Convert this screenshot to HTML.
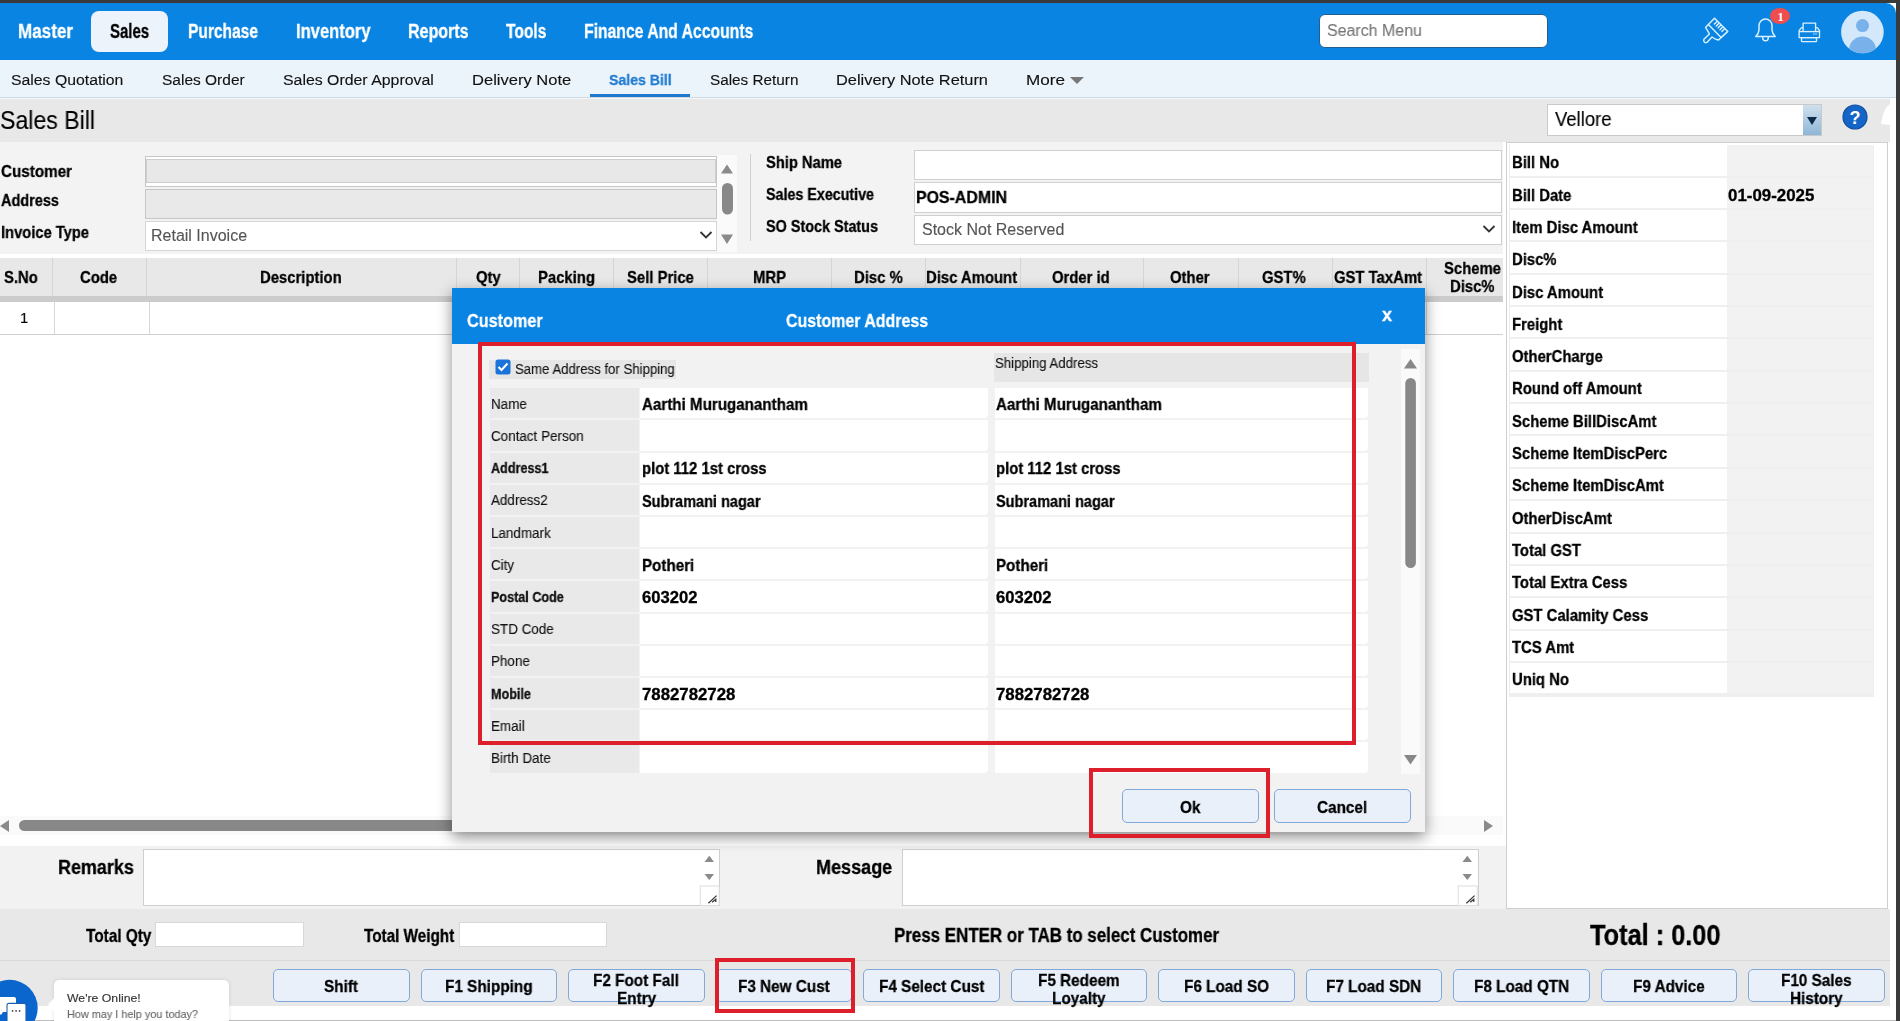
<!DOCTYPE html>
<html><head><meta charset="utf-8"><title>Sales Bill</title>
<style>
html,body{margin:0;padding:0;width:1900px;height:1021px;overflow:hidden;background:#fff}
body{position:relative;font-family:"Liberation Sans",sans-serif}
.t{position:absolute;white-space:nowrap;line-height:1.117;transform-origin:0 0;-webkit-font-smoothing:antialiased;will-change:transform}
.b{position:absolute}
.s{position:absolute;overflow:visible}
</style></head><body>
<div class="b" style="left:0.0px;top:0.0px;width:1900.0px;height:1021.0px;background:#fff"></div>
<div class="b" style="left:0.0px;top:3.0px;width:1896.0px;height:57.0px;background:#0984e3;border-top-right-radius:10px"></div>
<div class="b" style="left:91.0px;top:11.0px;width:77.0px;height:41.0px;background:#edf3fa;border-radius:8px"></div>
<div class="t" style="left:17.80px;top:21.15px;font-size:19.50px;font-weight:700;-webkit-text-stroke:0.3px #fff;transform:scaleX(0.8749);color:#fff;">Master</div>
<div class="t" style="left:110.00px;top:21.15px;font-size:19.50px;font-weight:700;-webkit-text-stroke:0.3px #000;transform:scaleX(0.7692);color:#000;">Sales</div>
<div class="t" style="left:187.80px;top:21.15px;font-size:19.50px;font-weight:700;-webkit-text-stroke:0.3px #fff;transform:scaleX(0.7973);color:#fff;">Purchase</div>
<div class="t" style="left:296.00px;top:21.15px;font-size:19.50px;font-weight:700;-webkit-text-stroke:0.3px #fff;transform:scaleX(0.8488);color:#fff;">Inventory</div>
<div class="t" style="left:408.40px;top:21.15px;font-size:19.50px;font-weight:700;-webkit-text-stroke:0.3px #fff;transform:scaleX(0.8225);color:#fff;">Reports</div>
<div class="t" style="left:506.00px;top:21.15px;font-size:19.50px;font-weight:700;-webkit-text-stroke:0.3px #fff;transform:scaleX(0.7972);color:#fff;">Tools</div>
<div class="t" style="left:584.20px;top:21.15px;font-size:19.50px;font-weight:700;-webkit-text-stroke:0.3px #fff;transform:scaleX(0.8068);color:#fff;">Finance And Accounts</div>
<div class="b" style="left:1318.5px;top:14.3px;width:229.5px;height:33.9px;background:#fff;border-radius:6px;border:1px solid #245d8f;box-sizing:border-box"></div>
<div class="t" style="left:1327.30px;top:21.60px;font-size:16.80px;-webkit-text-stroke:0.12px #777;transform:scaleX(0.9507);color:#777;">Search Menu</div>
<div class="b" style="left:0.0px;top:60.0px;width:1896.0px;height:37.0px;background:#ebf3fb"></div>
<div class="b" style="left:0.0px;top:97.0px;width:1896.0px;height:1.0px;background:#d0d8e0"></div>
<div class="b" style="left:0.0px;top:98.0px;width:1896.0px;height:1.0px;background:#f4f8fc"></div>
<div class="t" style="left:11.30px;top:70.95px;font-size:15.30px;-webkit-text-stroke:0.12px #111;transform:scaleX(1.0324);color:#111;">Sales Quotation</div>
<div class="t" style="left:162.00px;top:70.95px;font-size:15.30px;-webkit-text-stroke:0.12px #111;transform:scaleX(1.0130);color:#111;">Sales Order</div>
<div class="t" style="left:283.20px;top:70.95px;font-size:15.30px;-webkit-text-stroke:0.12px #111;transform:scaleX(1.0369);color:#111;">Sales Order Approval</div>
<div class="t" style="left:472.00px;top:70.95px;font-size:15.30px;-webkit-text-stroke:0.12px #111;transform:scaleX(1.0813);color:#111;">Delivery Note</div>
<div class="t" style="left:609.00px;top:70.95px;font-size:15.30px;font-weight:700;-webkit-text-stroke:0.3px #1f7bd0;transform:scaleX(0.9216);color:#1f7bd0;">Sales Bill</div>
<div class="t" style="left:709.50px;top:70.95px;font-size:15.30px;-webkit-text-stroke:0.12px #111;color:#111;">Sales Return</div>
<div class="t" style="left:836.00px;top:70.95px;font-size:15.30px;-webkit-text-stroke:0.12px #111;transform:scaleX(1.0704);color:#111;">Delivery Note Return</div>
<div class="t" style="left:1026.00px;top:70.95px;font-size:15.30px;-webkit-text-stroke:0.12px #111;transform:scaleX(1.1188);color:#111;">More</div>
<div class="b" style="left:590.0px;top:94.0px;width:100.0px;height:3.0px;background:#1f7bd0"></div>
<svg class="s" style="left:1068px;top:75px" width="18" height="10"><path d="M2 2 L16 2 L9 9 Z" fill="#777"/></svg>
<div class="b" style="left:0.0px;top:99.0px;width:1890.0px;height:43.0px;background:#e8e8e8"></div>
<div class="b" style="left:1890.0px;top:98.0px;width:6.0px;height:923.0px;background:#fff"></div>
<div class="t" style="left:0.00px;top:107.07px;font-size:25.00px;-webkit-text-stroke:0.12px #000;transform:scaleX(0.9239);color:#000;">Sales Bill</div>
<div class="b" style="left:1547.0px;top:104.0px;width:275.0px;height:32.0px;background:#fff;box-shadow:inset 0 0 0 1px #c9c9c9"></div>
<div class="b" style="left:1803.0px;top:105.0px;width:18.0px;height:30.0px;background:linear-gradient(#cfe0ee,#8fb6d6)"></div>
<svg class="s" style="left:1805px;top:114px" width="14" height="14"><path d="M2 3 L12 3 L7 11 Z" fill="#0b2a4a"/></svg>
<div class="t" style="left:1555.00px;top:107.90px;font-size:20.00px;-webkit-text-stroke:0.12px #000;transform:scaleX(0.9255);color:#000;">Vellore</div>
<svg class="s" style="left:1842px;top:104px" width="26" height="26"><circle cx="13" cy="13" r="12" fill="#1565c8" stroke="#0f4fa0" stroke-width="1.2"/><text x="13" y="19.5" text-anchor="middle" font-family="Liberation Sans" font-weight="700" font-size="18" fill="#fff">?</text></svg>
<svg class="s" style="left:1875px;top:100px" width="16" height="30"><path d="M15 4 L11 8 L8 14 L6 24 L15 25 Z" fill="#fff"/></svg>
<div class="b" style="left:0.0px;top:142.0px;width:1503.0px;height:112.0px;background:#f3f3f3"></div>
<div class="b" style="left:0.0px;top:253.5px;width:1503.0px;height:4.5px;background:#fff"></div>
<div class="t" style="left:1.00px;top:162.47px;font-size:16.50px;font-weight:700;-webkit-text-stroke:0.3px #000;transform:scaleX(0.9219);color:#000;">Customer</div>
<div class="t" style="left:1.00px;top:191.27px;font-size:16.50px;font-weight:700;-webkit-text-stroke:0.3px #000;transform:scaleX(0.8784);color:#000;">Address</div>
<div class="t" style="left:1.00px;top:223.07px;font-size:16.50px;font-weight:700;-webkit-text-stroke:0.3px #000;transform:scaleX(0.8913);color:#000;">Invoice Type</div>
<div class="b" style="left:145.2px;top:155.5px;width:571.5px;height:31.0px;background:#fff;border:1px solid #c6c6c6;box-sizing:border-box"></div>
<div class="b" style="left:146.0px;top:158.6px;width:570.0px;height:24.0px;background:#e8e8e8;border:1px solid #cdcdcd;box-sizing:border-box"></div>
<div class="b" style="left:145.2px;top:188.5px;width:571.5px;height:30.3px;background:#e9e9e9;border:1px solid #c6c6c6;box-sizing:border-box"></div>
<div class="b" style="left:145.2px;top:220.5px;width:571.5px;height:30.5px;background:#fff;border:1px solid #d6d6d6;box-sizing:border-box"></div>
<div class="t" style="left:151.00px;top:227.02px;font-size:16.00px;-webkit-text-stroke:0.12px #555;color:#555;">Retail Invoice</div>
<svg class="s" style="left:699px;top:230px" width="14" height="10"><path d="M1.5 2 L7 7.5 L12.5 2" stroke="#333" stroke-width="1.8" fill="none"/></svg>
<div class="b" style="left:717.0px;top:155.0px;width:20.0px;height:97.0px;background:#fafafa"></div>
<svg class="s" style="left:717px;top:155px" width="20" height="97"><path d="M4 18.5 L10 9.5 L16 18.5 Z" fill="#8a8a8a"/><rect x="5" y="28" width="11" height="31.5" rx="5.5" fill="#888"/><path d="M4 79.5 L16 79.5 L10 89 Z" fill="#8a8a8a"/></svg>
<div class="b" style="left:750.0px;top:154.0px;width:1.0px;height:87.0px;background:#cfcfcf"></div>
<div class="t" style="left:766.30px;top:153.47px;font-size:16.50px;font-weight:700;-webkit-text-stroke:0.3px #000;transform:scaleX(0.8913);color:#000;">Ship Name</div>
<div class="t" style="left:766.30px;top:185.07px;font-size:16.50px;font-weight:700;-webkit-text-stroke:0.3px #000;transform:scaleX(0.8657);color:#000;">Sales Executive</div>
<div class="t" style="left:766.30px;top:216.67px;font-size:16.50px;font-weight:700;-webkit-text-stroke:0.3px #000;transform:scaleX(0.8725);color:#000;">SO Stock Status</div>
<div class="b" style="left:914.0px;top:149.5px;width:588.0px;height:30.5px;background:#fff;border:1px solid #d0d0d0;box-sizing:border-box"></div>
<div class="b" style="left:914.0px;top:181.5px;width:588.0px;height:31.0px;background:#fff;border:1px solid #d0d0d0;box-sizing:border-box"></div>
<div class="t" style="left:916.00px;top:188.07px;font-size:16.50px;font-weight:700;-webkit-text-stroke:0.3px #000;transform:scaleX(0.9638);color:#000;">POS-ADMIN</div>
<div class="b" style="left:914.0px;top:215.0px;width:588.0px;height:29.5px;background:#fff;border:1px solid #d0d0d0;box-sizing:border-box"></div>
<div class="t" style="left:922.00px;top:221.02px;font-size:16.00px;-webkit-text-stroke:0.12px #555;color:#555;">Stock Not Reserved</div>
<svg class="s" style="left:1482px;top:224px" width="14" height="10"><path d="M1.5 2 L7 7.5 L12.5 2" stroke="#333" stroke-width="1.8" fill="none"/></svg>
<div class="b" style="left:1506.0px;top:142.0px;width:382.0px;height:767.0px;background:#fff;border:1px solid #cfcfcf;box-sizing:border-box"></div>
<div class="b" style="left:1509.0px;top:145.0px;width:365.0px;height:552.0px;background:#efefef"></div>
<div class="b" style="left:1510.0px;top:145.2px;width:217.0px;height:30.4px;background:#fff"></div>
<div class="b" style="left:1727.0px;top:145.2px;width:146.0px;height:30.4px;background:#f2f2f2"></div>
<div class="t" style="left:1512.00px;top:153.37px;font-size:16.50px;font-weight:700;-webkit-text-stroke:0.3px #000;transform:scaleX(0.9000);color:#000;">Bill No</div>
<div class="b" style="left:1510.0px;top:177.6px;width:217.0px;height:30.4px;background:#fff"></div>
<div class="b" style="left:1727.0px;top:177.6px;width:146.0px;height:30.4px;background:#f2f2f2"></div>
<div class="t" style="left:1512.00px;top:185.67px;font-size:16.50px;font-weight:700;-webkit-text-stroke:0.3px #000;transform:scaleX(0.9000);color:#000;">Bill Date</div>
<div class="b" style="left:1510.0px;top:209.9px;width:217.0px;height:30.4px;background:#fff"></div>
<div class="b" style="left:1727.0px;top:209.9px;width:146.0px;height:30.4px;background:#f2f2f2"></div>
<div class="t" style="left:1512.00px;top:217.97px;font-size:16.50px;font-weight:700;-webkit-text-stroke:0.3px #000;transform:scaleX(0.9000);color:#000;">Item Disc Amount</div>
<div class="b" style="left:1510.0px;top:242.3px;width:217.0px;height:30.4px;background:#fff"></div>
<div class="b" style="left:1727.0px;top:242.3px;width:146.0px;height:30.4px;background:#f2f2f2"></div>
<div class="t" style="left:1512.00px;top:250.27px;font-size:16.50px;font-weight:700;-webkit-text-stroke:0.3px #000;transform:scaleX(0.9000);color:#000;">Disc%</div>
<div class="b" style="left:1510.0px;top:274.6px;width:217.0px;height:30.4px;background:#fff"></div>
<div class="b" style="left:1727.0px;top:274.6px;width:146.0px;height:30.4px;background:#f2f2f2"></div>
<div class="t" style="left:1512.00px;top:282.57px;font-size:16.50px;font-weight:700;-webkit-text-stroke:0.3px #000;transform:scaleX(0.9000);color:#000;">Disc Amount</div>
<div class="b" style="left:1510.0px;top:307.0px;width:217.0px;height:30.4px;background:#fff"></div>
<div class="b" style="left:1727.0px;top:307.0px;width:146.0px;height:30.4px;background:#f2f2f2"></div>
<div class="t" style="left:1512.00px;top:314.87px;font-size:16.50px;font-weight:700;-webkit-text-stroke:0.3px #000;transform:scaleX(0.9000);color:#000;">Freight</div>
<div class="b" style="left:1510.0px;top:339.4px;width:217.0px;height:30.4px;background:#fff"></div>
<div class="b" style="left:1727.0px;top:339.4px;width:146.0px;height:30.4px;background:#f2f2f2"></div>
<div class="t" style="left:1512.00px;top:347.17px;font-size:16.50px;font-weight:700;-webkit-text-stroke:0.3px #000;transform:scaleX(0.9000);color:#000;">OtherCharge</div>
<div class="b" style="left:1510.0px;top:371.7px;width:217.0px;height:30.4px;background:#fff"></div>
<div class="b" style="left:1727.0px;top:371.7px;width:146.0px;height:30.4px;background:#f2f2f2"></div>
<div class="t" style="left:1512.00px;top:379.47px;font-size:16.50px;font-weight:700;-webkit-text-stroke:0.3px #000;transform:scaleX(0.9000);color:#000;">Round off Amount</div>
<div class="b" style="left:1510.0px;top:404.1px;width:217.0px;height:30.4px;background:#fff"></div>
<div class="b" style="left:1727.0px;top:404.1px;width:146.0px;height:30.4px;background:#f2f2f2"></div>
<div class="t" style="left:1512.00px;top:411.77px;font-size:16.50px;font-weight:700;-webkit-text-stroke:0.3px #000;transform:scaleX(0.9000);color:#000;">Scheme BillDiscAmt</div>
<div class="b" style="left:1510.0px;top:436.4px;width:217.0px;height:30.4px;background:#fff"></div>
<div class="b" style="left:1727.0px;top:436.4px;width:146.0px;height:30.4px;background:#f2f2f2"></div>
<div class="t" style="left:1512.00px;top:444.07px;font-size:16.50px;font-weight:700;-webkit-text-stroke:0.3px #000;transform:scaleX(0.9000);color:#000;">Scheme ItemDiscPerc</div>
<div class="b" style="left:1510.0px;top:468.8px;width:217.0px;height:30.4px;background:#fff"></div>
<div class="b" style="left:1727.0px;top:468.8px;width:146.0px;height:30.4px;background:#f2f2f2"></div>
<div class="t" style="left:1512.00px;top:476.37px;font-size:16.50px;font-weight:700;-webkit-text-stroke:0.3px #000;transform:scaleX(0.9000);color:#000;">Scheme ItemDiscAmt</div>
<div class="b" style="left:1510.0px;top:501.2px;width:217.0px;height:30.4px;background:#fff"></div>
<div class="b" style="left:1727.0px;top:501.2px;width:146.0px;height:30.4px;background:#f2f2f2"></div>
<div class="t" style="left:1512.00px;top:508.67px;font-size:16.50px;font-weight:700;-webkit-text-stroke:0.3px #000;transform:scaleX(0.9000);color:#000;">OtherDiscAmt</div>
<div class="b" style="left:1510.0px;top:533.5px;width:217.0px;height:30.4px;background:#fff"></div>
<div class="b" style="left:1727.0px;top:533.5px;width:146.0px;height:30.4px;background:#f2f2f2"></div>
<div class="t" style="left:1512.00px;top:540.97px;font-size:16.50px;font-weight:700;-webkit-text-stroke:0.3px #000;transform:scaleX(0.9000);color:#000;">Total GST</div>
<div class="b" style="left:1510.0px;top:565.9px;width:217.0px;height:30.4px;background:#fff"></div>
<div class="b" style="left:1727.0px;top:565.9px;width:146.0px;height:30.4px;background:#f2f2f2"></div>
<div class="t" style="left:1512.00px;top:573.27px;font-size:16.50px;font-weight:700;-webkit-text-stroke:0.3px #000;transform:scaleX(0.9000);color:#000;">Total Extra Cess</div>
<div class="b" style="left:1510.0px;top:598.2px;width:217.0px;height:30.4px;background:#fff"></div>
<div class="b" style="left:1727.0px;top:598.2px;width:146.0px;height:30.4px;background:#f2f2f2"></div>
<div class="t" style="left:1512.00px;top:605.57px;font-size:16.50px;font-weight:700;-webkit-text-stroke:0.3px #000;transform:scaleX(0.9000);color:#000;">GST Calamity Cess</div>
<div class="b" style="left:1510.0px;top:630.6px;width:217.0px;height:30.4px;background:#fff"></div>
<div class="b" style="left:1727.0px;top:630.6px;width:146.0px;height:30.4px;background:#f2f2f2"></div>
<div class="t" style="left:1512.00px;top:637.87px;font-size:16.50px;font-weight:700;-webkit-text-stroke:0.3px #000;transform:scaleX(0.9000);color:#000;">TCS Amt</div>
<div class="b" style="left:1510.0px;top:663.0px;width:217.0px;height:30.4px;background:#fff"></div>
<div class="b" style="left:1727.0px;top:663.0px;width:146.0px;height:30.4px;background:#f2f2f2"></div>
<div class="t" style="left:1512.00px;top:670.17px;font-size:16.50px;font-weight:700;-webkit-text-stroke:0.3px #000;transform:scaleX(0.9000);color:#000;">Uniq No</div>
<div class="t" style="left:1727.60px;top:186.07px;font-size:16.50px;font-weight:700;-webkit-text-stroke:0.3px #000;transform:scaleX(1.0224);color:#000;">01-09-2025</div>
<div class="b" style="left:0.0px;top:258.0px;width:1503.0px;height:38.0px;background:#e8e8e8"></div>
<div class="b" style="left:0.0px;top:296.0px;width:1503.0px;height:6.0px;background:#cccccc"></div>
<div class="b" style="left:52.0px;top:258.0px;width:1.0px;height:38.0px;background:#d6d6d6"></div>
<div class="b" style="left:146.0px;top:258.0px;width:1.0px;height:38.0px;background:#d6d6d6"></div>
<div class="b" style="left:456.0px;top:258.0px;width:1.0px;height:38.0px;background:#d6d6d6"></div>
<div class="b" style="left:519.0px;top:258.0px;width:1.0px;height:38.0px;background:#d6d6d6"></div>
<div class="b" style="left:613.0px;top:258.0px;width:1.0px;height:38.0px;background:#d6d6d6"></div>
<div class="b" style="left:707.0px;top:258.0px;width:1.0px;height:38.0px;background:#d6d6d6"></div>
<div class="b" style="left:831.0px;top:258.0px;width:1.0px;height:38.0px;background:#d6d6d6"></div>
<div class="b" style="left:925.0px;top:258.0px;width:1.0px;height:38.0px;background:#d6d6d6"></div>
<div class="b" style="left:1019.6px;top:258.0px;width:1.0px;height:38.0px;background:#d6d6d6"></div>
<div class="b" style="left:1143.0px;top:258.0px;width:1.0px;height:38.0px;background:#d6d6d6"></div>
<div class="b" style="left:1238.0px;top:258.0px;width:1.0px;height:38.0px;background:#d6d6d6"></div>
<div class="b" style="left:1332.0px;top:258.0px;width:1.0px;height:38.0px;background:#d6d6d6"></div>
<div class="b" style="left:1426.0px;top:258.0px;width:1.0px;height:38.0px;background:#d6d6d6"></div>
<div class="t" style="left:4.00px;top:267.87px;font-size:16.50px;font-weight:700;-webkit-text-stroke:0.3px #000;transform:scaleX(0.9000);color:#000;">S.No</div>
<div class="t" style="left:80.44px;top:267.87px;font-size:16.50px;font-weight:700;-webkit-text-stroke:0.3px #000;transform:scaleX(0.9000);color:#000;">Code</div>
<div class="t" style="left:260.15px;top:267.87px;font-size:16.50px;font-weight:700;-webkit-text-stroke:0.3px #000;transform:scaleX(0.9000);color:#000;">Description</div>
<div class="t" style="left:475.62px;top:267.87px;font-size:16.50px;font-weight:700;-webkit-text-stroke:0.3px #000;transform:scaleX(0.9000);color:#000;">Qty</div>
<div class="t" style="left:537.52px;top:267.87px;font-size:16.50px;font-weight:700;-webkit-text-stroke:0.3px #000;transform:scaleX(0.9000);color:#000;">Packing</div>
<div class="t" style="left:626.57px;top:267.87px;font-size:16.50px;font-weight:700;-webkit-text-stroke:0.3px #000;transform:scaleX(0.9000);color:#000;">Sell Price</div>
<div class="t" style="left:752.50px;top:267.87px;font-size:16.50px;font-weight:700;-webkit-text-stroke:0.3px #000;transform:scaleX(0.9000);color:#000;">MRP</div>
<div class="t" style="left:853.65px;top:267.87px;font-size:16.50px;font-weight:700;-webkit-text-stroke:0.3px #000;transform:scaleX(0.9000);color:#000;">Disc %</div>
<div class="t" style="left:926.48px;top:267.87px;font-size:16.50px;font-weight:700;-webkit-text-stroke:0.3px #000;transform:scaleX(0.9000);color:#000;">Disc Amount</div>
<div class="t" style="left:1052.12px;top:267.87px;font-size:16.50px;font-weight:700;-webkit-text-stroke:0.3px #000;transform:scaleX(0.9000);color:#000;">Order id</div>
<div class="t" style="left:1170.20px;top:267.87px;font-size:16.50px;font-weight:700;-webkit-text-stroke:0.3px #000;transform:scaleX(0.9000);color:#000;">Other</div>
<div class="t" style="left:1262.13px;top:267.87px;font-size:16.50px;font-weight:700;-webkit-text-stroke:0.3px #000;transform:scaleX(0.9000);color:#000;">GST%</div>
<div class="t" style="left:1333.99px;top:267.87px;font-size:16.50px;font-weight:700;-webkit-text-stroke:0.3px #000;transform:scaleX(0.9000);color:#000;">GST TaxAmt</div>
<div class="t" style="left:1443.52px;top:258.57px;font-size:16.50px;font-weight:700;-webkit-text-stroke:0.3px #000;transform:scaleX(0.9000);color:#000;">Scheme</div>
<div class="t" style="left:1449.71px;top:277.07px;font-size:16.50px;font-weight:700;-webkit-text-stroke:0.3px #000;transform:scaleX(0.9000);color:#000;">Disc%</div>
<div class="b" style="left:0.0px;top:302.0px;width:1503.0px;height:33.0px;background:#fff"></div>
<div class="b" style="left:0.0px;top:334.0px;width:1503.0px;height:1.0px;background:#cfcfcf"></div>
<div class="b" style="left:54.0px;top:302.0px;width:1.0px;height:32.0px;background:#d8d8d8"></div>
<div class="b" style="left:149.0px;top:302.0px;width:1.0px;height:32.0px;background:#d8d8d8"></div>
<div class="b" style="left:456.0px;top:302.0px;width:1.0px;height:32.0px;background:#d8d8d8"></div>
<div class="b" style="left:519.0px;top:302.0px;width:1.0px;height:32.0px;background:#d8d8d8"></div>
<div class="b" style="left:613.0px;top:302.0px;width:1.0px;height:32.0px;background:#d8d8d8"></div>
<div class="b" style="left:707.0px;top:302.0px;width:1.0px;height:32.0px;background:#d8d8d8"></div>
<div class="b" style="left:831.0px;top:302.0px;width:1.0px;height:32.0px;background:#d8d8d8"></div>
<div class="b" style="left:925.0px;top:302.0px;width:1.0px;height:32.0px;background:#d8d8d8"></div>
<div class="b" style="left:1019.6px;top:302.0px;width:1.0px;height:32.0px;background:#d8d8d8"></div>
<div class="b" style="left:1143.0px;top:302.0px;width:1.0px;height:32.0px;background:#d8d8d8"></div>
<div class="b" style="left:1238.0px;top:302.0px;width:1.0px;height:32.0px;background:#d8d8d8"></div>
<div class="b" style="left:1332.0px;top:302.0px;width:1.0px;height:32.0px;background:#d8d8d8"></div>
<div class="b" style="left:1426.0px;top:302.0px;width:1.0px;height:32.0px;background:#d8d8d8"></div>
<div class="t" style="left:20.00px;top:310.43px;font-size:15.00px;-webkit-text-stroke:0.12px #000;transform:scaleX(0.9800);color:#000;">1</div>
<div class="b" style="left:0.0px;top:816.0px;width:1503.0px;height:19.0px;background:#fafafa"></div>
<svg class="s" style="left:0;top:816px" width="1503" height="19"><path d="M0 10 L9 4 L9 16 Z" fill="#8a8a8a"/><rect x="19" y="4" width="1380" height="11" rx="5.5" fill="#888"/><path d="M1484 4 L1493 10 L1484 16 Z" fill="#8a8a8a"/></svg>
<div class="b" style="left:0.0px;top:846.0px;width:1506.0px;height:63.0px;background:#f2f2f2"></div>
<div class="t" style="left:57.60px;top:855.90px;font-size:20.00px;font-weight:700;-webkit-text-stroke:0.3px #000;transform:scaleX(0.8970);color:#000;">Remarks</div>
<div class="t" style="left:815.80px;top:855.90px;font-size:20.00px;font-weight:700;-webkit-text-stroke:0.3px #000;transform:scaleX(0.9018);color:#000;">Message</div>
<div class="b" style="left:143.0px;top:849.0px;width:577.0px;height:57.0px;background:#fff;border:1px solid #cfcfcf;box-sizing:border-box"></div>
<svg class="s" style="left:699px;top:849px" width="20" height="57"><path d="M5.5 13 L10.3 6.8 L15 13 Z" fill="#8a8a8a"/><path d="M5.5 25 L15 25 L10.3 31 Z" fill="#8a8a8a"/><rect x="1.2" y="37" width="19" height="19.5" fill="#fff" stroke="#ddd"/><path d="M9.4 54.2 L17.6 46.6 M13.2 53.2 L16.8 50.2 L16.8 53" stroke="#333" stroke-width="1.2" fill="none"/></svg>
<div class="b" style="left:902.0px;top:849.0px;width:576.5px;height:57.0px;background:#fff;border:1px solid #cfcfcf;box-sizing:border-box"></div>
<svg class="s" style="left:1457px;top:849px" width="20" height="57"><path d="M5.5 13 L10.3 6.8 L15 13 Z" fill="#8a8a8a"/><path d="M5.5 25 L15 25 L10.3 31 Z" fill="#8a8a8a"/><rect x="1.2" y="37" width="19" height="19.5" fill="#fff" stroke="#ddd"/><path d="M9.4 54.2 L17.6 46.6 M13.2 53.2 L16.8 50.2 L16.8 53" stroke="#333" stroke-width="1.2" fill="none"/></svg>
<div class="b" style="left:0.0px;top:909.0px;width:1890.0px;height:51.0px;background:#e8e8e8"></div>
<div class="b" style="left:0.0px;top:960.0px;width:1890.0px;height:1.0px;background:#d8d8d8"></div>
<div class="t" style="left:86.20px;top:924.80px;font-size:19.00px;font-weight:700;-webkit-text-stroke:0.3px #000;transform:scaleX(0.8081);color:#000;">Total Qty</div>
<div class="b" style="left:155.4px;top:922.4px;width:148.4px;height:24.3px;background:#fff;border:1px solid #d8d8d8;box-sizing:border-box"></div>
<div class="t" style="left:363.80px;top:924.80px;font-size:19.00px;font-weight:700;-webkit-text-stroke:0.3px #000;transform:scaleX(0.8037);color:#000;">Total Weight</div>
<div class="b" style="left:458.5px;top:922.4px;width:148.1px;height:24.3px;background:#fff;border:1px solid #d8d8d8;box-sizing:border-box"></div>
<div class="t" style="left:894.10px;top:924.65px;font-size:19.50px;font-weight:700;-webkit-text-stroke:0.3px #000;transform:scaleX(0.8677);color:#000;">Press ENTER or TAB to select Customer</div>
<div class="t" style="left:1590.00px;top:919.05px;font-size:29.00px;font-weight:700;-webkit-text-stroke:0.3px #000;transform:scaleX(0.8739);color:#000;">Total : 0.00</div>
<div class="b" style="left:0.0px;top:961.0px;width:1890.0px;height:45.0px;background:#e8e8e8"></div>
<div class="b" style="left:0.0px;top:1019.5px;width:1896.0px;height:1.5px;background:#bdbdbd"></div>
<div class="b" style="left:273.0px;top:968.6px;width:136.5px;height:33.8px;background:#e9f0fa;border:1px solid #80a9d9;border-radius:5px;box-sizing:border-box"></div>
<div class="t" style="left:324.25px;top:977.01px;font-size:17.00px;font-weight:700;-webkit-text-stroke:0.3px #000;transform:scaleX(0.9000);color:#000;">Shift</div>
<div class="b" style="left:420.5px;top:968.6px;width:136.5px;height:33.8px;background:#e9f0fa;border:1px solid #80a9d9;border-radius:5px;box-sizing:border-box"></div>
<div class="t" style="left:444.98px;top:977.01px;font-size:17.00px;font-weight:700;-webkit-text-stroke:0.3px #000;transform:scaleX(0.9000);color:#000;">F1 Shipping</div>
<div class="b" style="left:568.0px;top:968.6px;width:136.5px;height:33.8px;background:#e9f0fa;border:1px solid #80a9d9;border-radius:5px;box-sizing:border-box"></div>
<div class="t" style="left:593.33px;top:971.12px;font-size:17.00px;font-weight:700;-webkit-text-stroke:0.3px #000;transform:scaleX(0.9000);color:#000;">F2 Foot Fall</div>
<div class="t" style="left:616.69px;top:989.12px;font-size:17.00px;font-weight:700;-webkit-text-stroke:0.3px #000;transform:scaleX(0.9000);color:#000;">Entry</div>
<div class="b" style="left:715.5px;top:968.6px;width:136.5px;height:33.8px;background:#e9f0fa;border:1px solid #80a9d9;border-radius:5px;box-sizing:border-box"></div>
<div class="t" style="left:737.84px;top:977.01px;font-size:17.00px;font-weight:700;-webkit-text-stroke:0.3px #000;transform:scaleX(0.9000);color:#000;">F3 New Cust</div>
<div class="b" style="left:863.0px;top:968.6px;width:136.5px;height:33.8px;background:#e9f0fa;border:1px solid #80a9d9;border-radius:5px;box-sizing:border-box"></div>
<div class="t" style="left:878.53px;top:977.01px;font-size:17.00px;font-weight:700;-webkit-text-stroke:0.3px #000;transform:scaleX(0.9000);color:#000;">F4 Select Cust</div>
<div class="b" style="left:1010.5px;top:968.6px;width:136.5px;height:33.8px;background:#e9f0fa;border:1px solid #80a9d9;border-radius:5px;box-sizing:border-box"></div>
<div class="t" style="left:1037.93px;top:971.12px;font-size:17.00px;font-weight:700;-webkit-text-stroke:0.3px #000;transform:scaleX(0.9000);color:#000;">F5 Redeem</div>
<div class="t" style="left:1051.97px;top:989.12px;font-size:17.00px;font-weight:700;-webkit-text-stroke:0.3px #000;transform:scaleX(0.9000);color:#000;">Loyalty</div>
<div class="b" style="left:1158.0px;top:968.6px;width:136.5px;height:33.8px;background:#e9f0fa;border:1px solid #80a9d9;border-radius:5px;box-sizing:border-box"></div>
<div class="t" style="left:1183.74px;top:977.01px;font-size:17.00px;font-weight:700;-webkit-text-stroke:0.3px #000;transform:scaleX(0.9000);color:#000;">F6 Load SO</div>
<div class="b" style="left:1305.5px;top:968.6px;width:136.5px;height:33.8px;background:#e9f0fa;border:1px solid #80a9d9;border-radius:5px;box-sizing:border-box"></div>
<div class="t" style="left:1326.15px;top:977.01px;font-size:17.00px;font-weight:700;-webkit-text-stroke:0.3px #000;transform:scaleX(0.9000);color:#000;">F7 Load SDN</div>
<div class="b" style="left:1453.0px;top:968.6px;width:136.5px;height:33.8px;background:#e9f0fa;border:1px solid #80a9d9;border-radius:5px;box-sizing:border-box"></div>
<div class="t" style="left:1473.65px;top:977.01px;font-size:17.00px;font-weight:700;-webkit-text-stroke:0.3px #000;transform:scaleX(0.9000);color:#000;">F8 Load QTN</div>
<div class="b" style="left:1600.5px;top:968.6px;width:136.5px;height:33.8px;background:#e9f0fa;border:1px solid #80a9d9;border-radius:5px;box-sizing:border-box"></div>
<div class="t" style="left:1632.89px;top:977.01px;font-size:17.00px;font-weight:700;-webkit-text-stroke:0.3px #000;transform:scaleX(0.9000);color:#000;">F9 Advice</div>
<div class="b" style="left:1748.0px;top:968.6px;width:136.5px;height:33.8px;background:#e9f0fa;border:1px solid #80a9d9;border-radius:5px;box-sizing:border-box"></div>
<div class="t" style="left:1780.95px;top:971.12px;font-size:17.00px;font-weight:700;-webkit-text-stroke:0.3px #000;transform:scaleX(0.9000);color:#000;">F10 Sales</div>
<div class="t" style="left:1789.89px;top:989.12px;font-size:17.00px;font-weight:700;-webkit-text-stroke:0.3px #000;transform:scaleX(0.9000);color:#000;">History</div>
<svg class="s" style="left:0;top:975px" width="48" height="46"><circle cx="9.5" cy="33" r="28.2" fill="#0a66cc"/><rect x="-5" y="22" width="21" height="15" rx="2" fill="#fff"/><path d="M-2 37 L3 37 L1 40 Z" fill="#fff"/><rect x="7" y="28.4" width="19" height="22" rx="2" fill="#fff" stroke="#1b5fb0" stroke-width="1.1"/><circle cx="12.6" cy="35.9" r="0.9" fill="#445"/><circle cx="16.1" cy="35.9" r="0.9" fill="#445"/><circle cx="19.6" cy="35.9" r="0.9" fill="#445"/></svg>
<div class="b" style="left:54.0px;top:980.3px;width:175.0px;height:49.7px;background:#fff;border-radius:5px;box-shadow:0 0 4px rgba(0,0,0,.12)"></div>
<svg class="s" style="left:46px;top:996px" width="10" height="18"><path d="M9 1 L2 8.5 L9 16 Z" fill="#fff"/></svg>
<div class="t" style="left:67.00px;top:992.39px;font-size:11.50px;-webkit-text-stroke:0.12px #333;transform:scaleX(1.0666);color:#333;">We're Online!</div>
<div class="t" style="left:67.00px;top:1008.19px;font-size:11.50px;-webkit-text-stroke:0.12px #666;transform:scaleX(0.9444);color:#666;">How may I help you today?</div>
<div class="b" style="left:452.0px;top:288.0px;width:973.0px;height:544.0px;background:#f2f2f2;box-shadow:0 5px 14px rgba(0,0,0,.45)"></div>
<div class="b" style="left:452.0px;top:288.0px;width:973.0px;height:55.5px;background:#0984e3"></div>
<div class="t" style="left:467.20px;top:311.41px;font-size:18.00px;font-weight:700;-webkit-text-stroke:0.3px #fff;transform:scaleX(0.9010);color:#fff;">Customer</div>
<div class="t" style="left:786.00px;top:311.11px;font-size:18.00px;font-weight:700;-webkit-text-stroke:0.3px #fff;transform:scaleX(0.8867);color:#fff;">Customer Address</div>
<div class="t" style="left:1382.00px;top:304.66px;font-size:18.50px;font-weight:700;-webkit-text-stroke:0.3px #fff;transform:scaleX(0.9719);color:#fff;">x</div>
<div class="b" style="left:489.0px;top:360.0px;width:187.0px;height:19.0px;background:#e6e6e6"></div>
<svg class="s" style="left:495px;top:359px" width="16" height="16"><rect x="0.5" y="0.5" width="15" height="15" rx="2.5" fill="#1a73d9"/><path d="M3.5 8 L6.5 11 L12.5 4.5" stroke="#fff" stroke-width="2" fill="none"/></svg>
<div class="t" style="left:515.40px;top:361.93px;font-size:14.00px;-webkit-text-stroke:0.12px #111;transform:scaleX(0.9419);color:#111;">Same Address for Shipping</div>
<div class="b" style="left:994.0px;top:353.0px;width:374.5px;height:29.0px;background:#e6e6e6"></div>
<div class="t" style="left:995.00px;top:355.53px;font-size:14.00px;-webkit-text-stroke:0.12px #111;transform:scaleX(0.9452);color:#111;">Shipping Address</div>
<div class="b" style="left:490.0px;top:388.1px;width:149.0px;height:30.4px;background:#e9e9e9"></div>
<div class="b" style="left:640.0px;top:388.1px;width:348.0px;height:30.4px;background:#fff;border-bottom-right-radius:4px"></div>
<div class="b" style="left:995.0px;top:388.1px;width:373.0px;height:30.4px;background:#fff;border-bottom-right-radius:4px"></div>
<div class="t" style="left:491.40px;top:396.73px;font-size:14.00px;-webkit-text-stroke:0.12px #111;transform:scaleX(0.9600);color:#111;">Name</div>
<div class="t" style="left:641.60px;top:395.05px;font-size:16.30px;font-weight:700;-webkit-text-stroke:0.3px #000;transform:scaleX(0.9305);color:#000;">Aarthi Muruganantham</div>
<div class="t" style="left:996.00px;top:395.05px;font-size:16.30px;font-weight:700;-webkit-text-stroke:0.3px #000;transform:scaleX(0.9305);color:#000;">Aarthi Muruganantham</div>
<div class="b" style="left:490.0px;top:420.3px;width:149.0px;height:30.4px;background:#e9e9e9"></div>
<div class="b" style="left:640.0px;top:420.3px;width:348.0px;height:30.4px;background:#fff;border-bottom-right-radius:4px"></div>
<div class="b" style="left:995.0px;top:420.3px;width:373.0px;height:30.4px;background:#fff;border-bottom-right-radius:4px"></div>
<div class="t" style="left:491.40px;top:428.93px;font-size:14.00px;-webkit-text-stroke:0.12px #111;transform:scaleX(0.9600);color:#111;">Contact Person</div>
<div class="b" style="left:490.0px;top:452.5px;width:149.0px;height:30.4px;background:#e9e9e9"></div>
<div class="b" style="left:640.0px;top:452.5px;width:348.0px;height:30.4px;background:#fff;border-bottom-right-radius:4px"></div>
<div class="b" style="left:995.0px;top:452.5px;width:373.0px;height:30.4px;background:#fff;border-bottom-right-radius:4px"></div>
<div class="t" style="left:491.40px;top:461.13px;font-size:14.00px;font-weight:700;-webkit-text-stroke:0.3px #111;transform:scaleX(0.9000);color:#111;">Address1</div>
<div class="t" style="left:641.60px;top:459.45px;font-size:16.30px;font-weight:700;-webkit-text-stroke:0.3px #000;transform:scaleX(0.9122);color:#000;">plot 112 1st cross</div>
<div class="t" style="left:996.00px;top:459.45px;font-size:16.30px;font-weight:700;-webkit-text-stroke:0.3px #000;transform:scaleX(0.9122);color:#000;">plot 112 1st cross</div>
<div class="b" style="left:490.0px;top:484.7px;width:149.0px;height:30.4px;background:#e9e9e9"></div>
<div class="b" style="left:640.0px;top:484.7px;width:348.0px;height:30.4px;background:#fff;border-bottom-right-radius:4px"></div>
<div class="b" style="left:995.0px;top:484.7px;width:373.0px;height:30.4px;background:#fff;border-bottom-right-radius:4px"></div>
<div class="t" style="left:491.40px;top:493.33px;font-size:14.00px;-webkit-text-stroke:0.12px #111;transform:scaleX(0.9600);color:#111;">Address2</div>
<div class="t" style="left:641.60px;top:491.65px;font-size:16.30px;font-weight:700;-webkit-text-stroke:0.3px #000;transform:scaleX(0.8914);color:#000;">Subramani nagar</div>
<div class="t" style="left:996.00px;top:491.65px;font-size:16.30px;font-weight:700;-webkit-text-stroke:0.3px #000;transform:scaleX(0.8914);color:#000;">Subramani nagar</div>
<div class="b" style="left:490.0px;top:516.9px;width:149.0px;height:30.4px;background:#e9e9e9"></div>
<div class="b" style="left:640.0px;top:516.9px;width:348.0px;height:30.4px;background:#fff;border-bottom-right-radius:4px"></div>
<div class="b" style="left:995.0px;top:516.9px;width:373.0px;height:30.4px;background:#fff;border-bottom-right-radius:4px"></div>
<div class="t" style="left:491.40px;top:525.53px;font-size:14.00px;-webkit-text-stroke:0.12px #111;transform:scaleX(0.9600);color:#111;">Landmark</div>
<div class="b" style="left:490.0px;top:549.1px;width:149.0px;height:30.4px;background:#e9e9e9"></div>
<div class="b" style="left:640.0px;top:549.1px;width:348.0px;height:30.4px;background:#fff;border-bottom-right-radius:4px"></div>
<div class="b" style="left:995.0px;top:549.1px;width:373.0px;height:30.4px;background:#fff;border-bottom-right-radius:4px"></div>
<div class="t" style="left:491.40px;top:557.73px;font-size:14.00px;-webkit-text-stroke:0.12px #111;transform:scaleX(0.9600);color:#111;">City</div>
<div class="t" style="left:641.60px;top:556.05px;font-size:16.30px;font-weight:700;-webkit-text-stroke:0.3px #000;transform:scaleX(0.9314);color:#000;">Potheri</div>
<div class="t" style="left:996.00px;top:556.05px;font-size:16.30px;font-weight:700;-webkit-text-stroke:0.3px #000;transform:scaleX(0.9314);color:#000;">Potheri</div>
<div class="b" style="left:490.0px;top:581.3px;width:149.0px;height:30.4px;background:#e9e9e9"></div>
<div class="b" style="left:640.0px;top:581.3px;width:348.0px;height:30.4px;background:#fff;border-bottom-right-radius:4px"></div>
<div class="b" style="left:995.0px;top:581.3px;width:373.0px;height:30.4px;background:#fff;border-bottom-right-radius:4px"></div>
<div class="t" style="left:491.40px;top:589.93px;font-size:14.00px;font-weight:700;-webkit-text-stroke:0.3px #111;transform:scaleX(0.9000);color:#111;">Postal Code</div>
<div class="t" style="left:641.60px;top:588.25px;font-size:16.30px;font-weight:700;-webkit-text-stroke:0.3px #000;transform:scaleX(1.0203);color:#000;">603202</div>
<div class="t" style="left:996.00px;top:588.25px;font-size:16.30px;font-weight:700;-webkit-text-stroke:0.3px #000;transform:scaleX(1.0203);color:#000;">603202</div>
<div class="b" style="left:490.0px;top:613.5px;width:149.0px;height:30.4px;background:#e9e9e9"></div>
<div class="b" style="left:640.0px;top:613.5px;width:348.0px;height:30.4px;background:#fff;border-bottom-right-radius:4px"></div>
<div class="b" style="left:995.0px;top:613.5px;width:373.0px;height:30.4px;background:#fff;border-bottom-right-radius:4px"></div>
<div class="t" style="left:491.40px;top:622.13px;font-size:14.00px;-webkit-text-stroke:0.12px #111;transform:scaleX(0.9600);color:#111;">STD Code</div>
<div class="b" style="left:490.0px;top:645.7px;width:149.0px;height:30.4px;background:#e9e9e9"></div>
<div class="b" style="left:640.0px;top:645.7px;width:348.0px;height:30.4px;background:#fff;border-bottom-right-radius:4px"></div>
<div class="b" style="left:995.0px;top:645.7px;width:373.0px;height:30.4px;background:#fff;border-bottom-right-radius:4px"></div>
<div class="t" style="left:491.40px;top:654.33px;font-size:14.00px;-webkit-text-stroke:0.12px #111;transform:scaleX(0.9600);color:#111;">Phone</div>
<div class="b" style="left:490.0px;top:677.9px;width:149.0px;height:30.4px;background:#e9e9e9"></div>
<div class="b" style="left:640.0px;top:677.9px;width:348.0px;height:30.4px;background:#fff;border-bottom-right-radius:4px"></div>
<div class="b" style="left:995.0px;top:677.9px;width:373.0px;height:30.4px;background:#fff;border-bottom-right-radius:4px"></div>
<div class="t" style="left:491.40px;top:686.53px;font-size:14.00px;font-weight:700;-webkit-text-stroke:0.3px #111;transform:scaleX(0.9000);color:#111;">Mobile</div>
<div class="t" style="left:641.60px;top:684.85px;font-size:16.30px;font-weight:700;-webkit-text-stroke:0.3px #000;transform:scaleX(1.0314);color:#000;">7882782728</div>
<div class="t" style="left:996.00px;top:684.85px;font-size:16.30px;font-weight:700;-webkit-text-stroke:0.3px #000;transform:scaleX(1.0314);color:#000;">7882782728</div>
<div class="b" style="left:490.0px;top:710.1px;width:149.0px;height:30.4px;background:#e9e9e9"></div>
<div class="b" style="left:640.0px;top:710.1px;width:348.0px;height:30.4px;background:#fff;border-bottom-right-radius:4px"></div>
<div class="b" style="left:995.0px;top:710.1px;width:373.0px;height:30.4px;background:#fff;border-bottom-right-radius:4px"></div>
<div class="t" style="left:491.40px;top:718.73px;font-size:14.00px;-webkit-text-stroke:0.12px #111;transform:scaleX(0.9600);color:#111;">Email</div>
<div class="b" style="left:490.0px;top:742.3px;width:149.0px;height:30.4px;background:#e9e9e9"></div>
<div class="b" style="left:640.0px;top:742.3px;width:348.0px;height:30.4px;background:#fff;border-bottom-right-radius:4px"></div>
<div class="b" style="left:995.0px;top:742.3px;width:373.0px;height:30.4px;background:#fff;border-bottom-right-radius:4px"></div>
<div class="t" style="left:491.40px;top:750.93px;font-size:14.00px;-webkit-text-stroke:0.12px #111;transform:scaleX(0.9600);color:#111;">Birth Date</div>
<div class="b" style="left:1401.0px;top:349.0px;width:19.0px;height:425.0px;background:#fafafa"></div>
<svg class="s" style="left:1401px;top:349px" width="19" height="425"><path d="M3 19.5 L9.5 10 L16 19.5 Z" fill="#888"/><rect x="4.3" y="29" width="10.6" height="190" rx="5.3" fill="#888"/><path d="M3 406 L16 406 L9.5 415.5 Z" fill="#888"/></svg>
<div class="b" style="left:1122.0px;top:789.3px;width:136.7px;height:34.1px;background:#e9f0fa;border:1px solid #80a9d9;border-radius:5px;box-sizing:border-box"></div>
<div class="b" style="left:1274.2px;top:789.3px;width:136.6px;height:34.1px;background:#e9f0fa;border:1px solid #80a9d9;border-radius:5px;box-sizing:border-box"></div>
<div class="t" style="left:1180.20px;top:797.62px;font-size:17.00px;font-weight:700;-webkit-text-stroke:0.3px #000;transform:scaleX(0.9000);color:#000;">Ok</div>
<div class="t" style="left:1317.41px;top:797.62px;font-size:17.00px;font-weight:700;-webkit-text-stroke:0.3px #000;transform:scaleX(0.9000);color:#000;">Cancel</div>
<div class="b" style="left:478.4px;top:342.2px;width:877.6px;height:402.8px;border:4.6px solid #dc1f2b;box-sizing:border-box"></div>
<div class="b" style="left:1089.0px;top:768.0px;width:181.0px;height:70.0px;border:4.8px solid #dc1f2b;box-sizing:border-box"></div>
<div class="b" style="left:715.0px;top:958.2px;width:140.4px;height:54.4px;border:4px solid #dc1f2b;box-sizing:border-box"></div>
<svg class="s" style="left:1698px;top:10px" width="40" height="40" viewBox="0 0 40 40"><g fill="none" stroke="#d9f1ff" stroke-width="1.45" stroke-linejoin="round" stroke-linecap="round"><path d="M16.5 8.2 L29.8 21.4 L23.1 27.6 L10.4 14.5 Z"/><path d="M10.4 14.5 L7.6 17.6 Q9.8 20.8 11.4 23.9 L5.9 29.3 A2.3 2.3 0 0 0 8.9 32.4 L14 27 Q17.3 29.6 20.6 30 L23.1 27.6"/><path d="M18.63 11.90 L16.43 14.10 M20.49 13.75 L18.29 15.95 M22.35 15.60 L20.15 17.80 M24.21 17.45 L22.01 19.65 M26.07 19.30 L23.87 21.50 "/></g></svg>
<svg class="s" style="left:1750px;top:4px" width="44" height="44" viewBox="0 0 44 44"><g fill="none" stroke="#d9f1ff" stroke-width="1.5" stroke-linejoin="round" stroke-linecap="round"><path d="M5.8 32.6 L25.2 32.6 Q22.3 29.5 22 26 L22 21.6 A6.5 6.5 0 0 0 9 21.6 L9 26 Q8.7 29.5 5.8 32.6 Z"/><path d="M12.7 33.2 A2.8 3.6 0 0 0 18.3 33.2"/></g><ellipse cx="30" cy="12" rx="10" ry="8" fill="#f04e4e"/><text x="30.5" y="16.6" text-anchor="middle" font-family="Liberation Serif" font-weight="700" font-size="12.5" fill="#fff">1</text></svg>
<svg class="s" style="left:1794px;top:14px" width="30" height="30" viewBox="0 0 30 30"><g fill="none" stroke="#d9f1ff" stroke-width="1.35" stroke-linejoin="round"><path d="M9.1 17.4 L9.1 9.1 L21.6 9.1 L21.6 17.4"/><path d="M9.1 13.6 L7.2 13.9 L5.1 16.6 L5.1 23.6 L25.5 23.6 L25.5 16.6 L23.5 13.9 L21.6 13.6"/><path d="M5.1 17.6 L25.5 17.6"/><rect x="7.5" y="23.6" width="15" height="4" rx="0.6"/></g><rect x="19.1" y="19.2" width="1.5" height="1.6" fill="#7fd0ff"/><rect x="21.3" y="19.2" width="1.5" height="1.6" fill="#7fd0ff"/></svg>
<svg class="s" style="left:1840px;top:10px" width="44" height="44"><defs><clipPath id="cc"><circle cx="22.4" cy="22" r="21.3"/></clipPath></defs><circle cx="22.4" cy="22" r="21.3" fill="#d4e8fb"/><g clip-path="url(#cc)" fill="#79b2ea"><circle cx="22.5" cy="15.6" r="6.5"/><ellipse cx="22.5" cy="40" rx="13.5" ry="13.5"/></g></svg>
<div class="b" style="left:0.0px;top:0.0px;width:1900.0px;height:3.0px;background:#3a3a3a"></div>
<div class="b" style="left:1896.0px;top:0.0px;width:4.0px;height:1021.0px;background:#3a3a3a"></div>
</body></html>
